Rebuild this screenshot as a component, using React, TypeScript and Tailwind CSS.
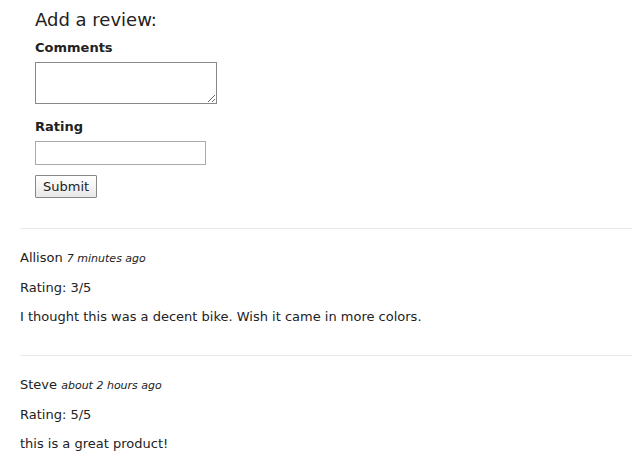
import React from 'react';

const reviews = [
  { name: 'Allison', time: '7 minutes ago', rating: '3/5', body: 'I thought this was a decent bike. Wish it came in more colors.' },
  { name: 'Steve', time: 'about 2 hours ago', rating: '5/5', body: 'this is a great product!' },
];

export default function App() {
  return (
    <div className="w-[632px] h-[458px] overflow-hidden bg-white text-[#222] font-['DejaVu_Sans',Verdana,sans-serif]">
      {/* Review form */}
      <div className="pl-[35px] pt-[8px]">
        <h2 className="text-[18px] leading-[24px]">Add a review:</h2>
        <div className="mt-[7px] text-[13px] font-bold leading-[18px]">Comments</div>
        <textarea className="mt-[5px] block w-[182px] h-[42px] border border-[#888] bg-white resize-y" />
        <div className="mt-[14px] text-[13px] font-bold leading-[18px]">Rating</div>
        <input type="text" className="mt-[5px] block w-[171px] h-[24px] border border-[#aaa] bg-white" />
        <button className="mt-[10px] block h-[23px] px-[7px] text-[13px] leading-[20px] border border-[#888] bg-gradient-to-b from-white to-[#e8e8e8] rounded-[1px]">
          Submit
        </button>
      </div>

      {/* Reviews */}
      <div className="ml-[20px] mt-[30px]">
        {reviews.map((r) => (
          <div key={r.name} className="border-t border-[#e8e8e8] pt-[20px] pb-[29px] text-[13px] leading-[18px]">
            <div>
              {r.name} <em className="text-[11px]">{r.time}</em>
            </div>
            <div className="mt-[11px]">Rating: {r.rating}</div>
            <div className="mt-[11px]">{r.body}</div>
          </div>
        ))}
      </div>
    </div>
  );
}
